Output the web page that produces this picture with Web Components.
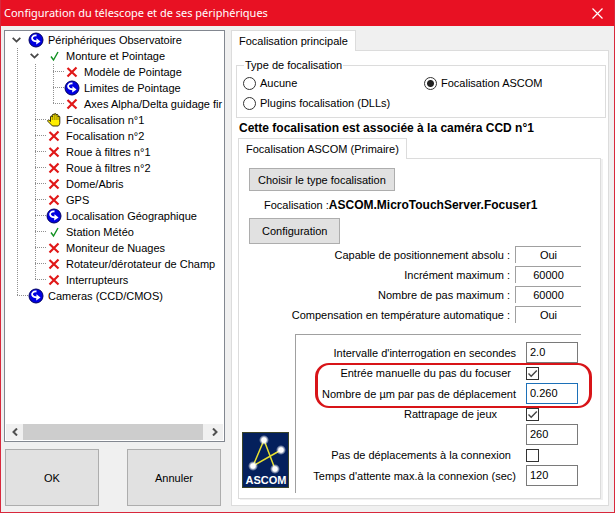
<!DOCTYPE html>
<html lang="fr">
<head>
<meta charset="utf-8">
<title>Configuration du télescope</title>
<style>
  body {
    margin: 0;
    font: 11px/16px "Liberation Sans", Arial, sans-serif;
    color: #000;
    --face: #f0f0f0;
    --line: #dcdcdc;
  }
</style>
</head>
<body>
<script>
class AppWindow extends HTMLElement {
  connectedCallback() {
    this.attachShadow({ mode: 'open' });
    this.shadowRoot.innerHTML = `
      <style>
        :host {
          display: flex;
          flex-direction: column;
          box-sizing: border-box;
          min-height: 100vh;
          background: var(--face);
          border: 1px solid #d8283c;
          border-top: 0;
        }
        header {
          display: flex;
          align-items: center;
          justify-content: space-between;
          height: 26px;
          padding: 0 9px 0 3px;
          background: #e81123;
          color: #fff;
        }
        h1 {
          margin: 0;
          font: 11px/16px "Noto Sans", "Open Sans", sans-serif;
        }
        button {
          display: flex;
          padding: 2px;
          border: 0;
          background: none;
        }
        main {
          flex: 1;
          display: grid;
          grid-template-columns: minmax(0, 221fr) minmax(0, 378fr);
          gap: 6px;
          padding: 4px 5px 6px 3px;
        }
      </style>
      <header>
        <h1>${this.getAttribute('caption')}</h1>
        <button type="button" aria-label="Fermer">
          <svg width="11" height="11" viewBox="0 0 11 11" stroke="#fff" stroke-width="1.2"><path d="M.5.5l10 10M10.500.5l-10 10"/></svg>
        </button>
      </header>
      <main><slot></slot></main>
    `;
  }
}

class SidePane extends HTMLElement {
  connectedCallback() {
    this.attachShadow({ mode: 'open' });
    this.shadowRoot.innerHTML = `
      <style>
        :host { display: flex; flex-direction: column; gap: 7px; }
        .actions {
          display: grid;
          grid-template-columns: 1fr 1fr;
          gap: 28px;
          padding: 0 4px 0 1px;
        }
      </style>
      <slot></slot>
      <div class="actions"><slot name="action"></slot></div>
    `;
  }
}

class PushButton extends HTMLElement {
  connectedCallback() {
    this.attachShadow({ mode: 'open' });
    this.shadowRoot.innerHTML = `
      <style>
        :host { display: grid; }
        button {
          height: 23px;
          padding: 0 8px;
          border: 1px solid #adadad;
          background: #e1e1e1;
          color: inherit;
          font: inherit;
        }
        :host([size="medium"]) button { height: 26px; padding: 0 12px; }
        :host([size="large"]) button { height: 57px; }
      </style>
      <button type="button"><slot></slot></button>
    `;
  }
}

class TreeView extends HTMLElement {
  connectedCallback() {
    this.attachShadow({ mode: 'open' });
    this.shadowRoot.innerHTML = `
      <style>
        :host {
          flex: 1;
          display: flex;
          flex-direction: column;
          min-height: 0;
          border: 1px solid #828790;
          background: #fff;
          overflow: hidden;
        }
        .items { flex: 1; padding: 1px 0 0 12px; overflow: hidden; }
        .scroll {
          display: flex;
          justify-content: space-between;
          height: 16px;
          margin: 1px;
          background: var(--face);
        }
        button {
          display: flex;
          align-items: center;
          justify-content: center;
          width: 17px;
          padding: 0;
          border: 0;
          background: none;
        }
        .thumb { flex: 1; margin-right: 3px; background: #cdcdcd; }
        svg { fill: none; stroke: #505050; stroke-width: 2; }
      </style>
      <div class="items" role="tree"><slot></slot></div>
      <div class="scroll">
        <button type="button" aria-label="Gauche"><svg width="6" height="8" viewBox="0 0 6 8"><path d="M5 .5L1.500 4L5 7.500"/></svg></button>
        <div class="thumb"></div>
        <button type="button" aria-label="Droite"><svg width="6" height="8" viewBox="0 0 6 8"><path d="M1 .5L4.500 4L1 7.500"/></svg></button>
      </div>
    `;
  }
}

const ICONS = {
  link: `<circle cx="8" cy="8" r="7" fill="#0000e0" stroke="#000060"/>
    <path d="M8.500 3.500C5.500 3 3.500 5 4.200 7c.5 1.600 2.300 2.300 4.800 2.300" fill="none" stroke="#fff" stroke-width="1.800"/>
    <path d="M8.500 6.200l4 3.400-4.300 3z" fill="#fff"/>`,
  check: '<path d="M5 8.500l2.500 3.500L12 4" fill="none" stroke="#109020" stroke-width="1.400"/>',
  cross: '<path d="M3.500 4l9 8.500M12.500 3.500L3.500 12.500" fill="none" stroke="#e01818" stroke-width="2.200"/>',
  hand: `<path d="M4.500 9.500V5c0-1.300 1.800-1.300 1.800 0V3.200c0-1.300 1.900-1.300 1.900 0V2.500c0-1.300 1.900-1.300 1.900 0v.8c0-1.300 1.900-1.300 1.900 0V5c0-1.200 1.800-1.200 1.800 0v5.500c0 2-1 3-1.500 3.500H6.500L2 9.500c-1-1.200.5-2.200 1.500-1.200z" fill="#fe0" stroke="#201800" stroke-width=".9"/>
    <path d="M6.300 5v3M8.200 3.500v4.500M10.100 3.500v4.500M12 5v3" stroke="#504000" stroke-width=".6"/>`
};

class TreeItem extends HTMLElement {
  connectedCallback() {
    const open = this.hasAttribute('open');
    this.setAttribute('role', 'treeitem');
    this.attachShadow({ mode: 'open' });
    this.shadowRoot.innerHTML = `
      <style>
        :host {
          display: grid;
          grid-template-columns: 11px auto;
          justify-content: start;
          --dots: repeating-linear-gradient(to bottom, #909090 0 1px, transparent 1px 2px) left / 1px 100% no-repeat;
        }
        .joint { display: grid; grid-template-rows: 8px 8px; }
        .joint i:first-child {
          background: var(--dots), repeating-linear-gradient(to right, #909090 0 1px, transparent 1px 2px) bottom / 100% 1px no-repeat;
        }
        .joint i:last-child, .rail { background: var(--dots); }
        :host([last]) .rail, :host([last]) .joint i:last-child { background: none; }
        .toggle {
          display: flex;
          align-items: center;
          width: 11px;
          height: 16px;
          margin-left: -5px;
          padding: 0;
          border: 0;
          background: #fff;
        }
        .row { display: flex; align-items: center; gap: 4px; white-space: nowrap; }
        .children { padding-left: 7px; }
      </style>
      ${open ? `<button class="toggle" type="button" aria-label="Réduire">
        <svg width="9" height="6" viewBox="0 0 9 6" fill="none" stroke="#484848" stroke-width="1.800"><path d="M.7.8l3.800 3.800L8.300.8"/></svg>
      </button>` : '<div class="joint"><i></i><i></i></div>'}
      <div class="row">
        <svg width="16" height="16" viewBox="0 0 16 16">${ICONS[this.getAttribute('icon')]}</svg>
        <span>${this.getAttribute('label')}</span>
      </div>
      <div class="rail"></div>
      <div class="children" role="group"><slot></slot></div>
    `;
  }
}

class TabPanel extends HTMLElement {
  connectedCallback() {
    this.attachShadow({ mode: 'open' });
    this.shadowRoot.innerHTML = `
      <style>
        :host { display: flex; flex-direction: column; align-items: stretch; }
        [role=tab] {
          position: relative;
          align-self: flex-start;
          height: 21px;
          margin: 0 0 -1px;
          padding: 0 7px;
          border: 1px solid var(--line);
          border-bottom: 0;
          background: #fff;
          color: inherit;
          font: inherit;
        }
        .panel {
          flex: 1;
          display: flex;
          flex-direction: column;
          border: 1px solid var(--line);
          background: #fff;
        }
        :host([inner]) .panel { box-shadow: 2px 1px 0 #f0f0f0; }
      </style>
      <button role="tab" type="button" aria-selected="true">${this.getAttribute('tab')}</button>
      <div class="panel" role="tabpanel"><slot></slot></div>
    `;
  }
}

class FocusType extends HTMLElement {
  connectedCallback() {
    this.attachShadow({ mode: 'open' });
    this.shadowRoot.innerHTML = `
      <style>
        :host { display: block; padding: 6px 2px 0 4px; }
        fieldset {
          display: grid;
          grid-template-columns: 1fr 1fr;
          grid-auto-rows: 20px;
          margin: 0;
          padding: 0 0 4px 6px;
          border: 1px solid var(--line);
        }
        legend { margin-left: 1px; padding: 0 1px; }
        label { display: flex; align-items: center; gap: 4px; }
        input {
          appearance: none;
          box-sizing: border-box;
          width: 13px;
          height: 13px;
          margin: 0;
          border: 1px solid #333;
          border-radius: 50%;
          background: #fff;
        }
        input:checked { background: radial-gradient(circle, #222 3px, #fff 4px); }
      </style>
      <fieldset>
        <legend>Type de focalisation</legend>
        <label><input type="radio" name="type">Aucune</label>
        <label><input type="radio" name="type" checked>Focalisation ASCOM</label>
        <label><input type="radio" name="type">Plugins focalisation (DLLs)</label>
      </fieldset>
    `;
  }
}

class FocuserDriver extends HTMLElement {
  connectedCallback() {
    this.attachShadow({ mode: 'open' });
    this.shadowRoot.innerHTML = `
      <style>
        :host {
          display: flex;
          flex-direction: column;
          align-items: flex-start;
          padding: 9px 10px 2px;
        }
        p { margin: 6px 0 5px 15px; }
        b { font-size: 12px; }
      </style>
      <push-button>Choisir le type focalisation</push-button>
      <p>Focalisation :<b>${this.getAttribute('driver')}</b></p>
      <push-button size="medium">Configuration</push-button>
    `;
  }
}

class ReadOut extends HTMLElement {
  connectedCallback() {
    this.attachShadow({ mode: 'open' });
    this.shadowRoot.innerHTML = `
      <style>
        :host {
          display: grid;
          grid-template-columns: 1fr 66px;
          gap: 5px;
          height: 20px;
          padding-right: 19px;
          text-align: right;
        }
        label { padding-top: 1px; }
        output {
          box-sizing: border-box;
          height: 17px;
          border: solid #a0a0a0;
          border-width: 1px 0 0 1px;
          text-align: center;
        }
      </style>
      <label for="value">${this.getAttribute('label')}</label>
      <output id="value">${this.getAttribute('value')}</output>
    `;
  }
}

class FormRow extends HTMLElement {
  connectedCallback() {
    const label = this.getAttribute('label');
    const check = this.getAttribute('type') === 'checkbox';
    const state = check
      ? (this.hasAttribute('checked') ? 'checked' : '')
      : `value="${this.getAttribute('value')}"`;
    this.attachShadow({ mode: 'open' });
    this.shadowRoot.innerHTML = `
      <style>
        :host {
          display: grid;
          grid-template-columns: 1fr 52px;
          align-items: center;
          gap: 10px;
          text-align: right;
        }
        :host([type="checkbox"]) { height: 20px; }
        :host([type="checkbox"]) label { padding-right: 5px; }
        :host([short]) label { padding-right: 19px; }
        input { box-sizing: border-box; margin: 0; background: #fff; }
        input[type=text] {
          width: 100%;
          height: 21px;
          padding: 0 3px 2px;
          border: 1px solid #7a7a7a;
          color: inherit;
          font: inherit;
        }
        :host([active]) input { border-color: #1c70b8; }
        input[type=checkbox] {
          appearance: none;
          width: 13px;
          height: 13px;
          border: 1px solid #333;
        }
        .box { display: grid; justify-items: start; align-items: center; }
        .box > * { grid-area: 1 / 1; }
        svg { display: none; pointer-events: none; }
        input:checked + svg { display: block; }
      </style>
      ${label ? `<label for="field">${label}</label>` : '<span></span>'}
      <div class="box">
        <input id="field" type="${check ? 'checkbox' : 'text'}" ${state} ${label ? '' : 'aria-label="Jeux"'}>
        <svg width="13" height="13" viewBox="0 0 13 13" fill="none" stroke="#444" stroke-width="1.400"><path d="M2.500 6.500l2.700 2.700L10.800 3.600"/></svg>
      </div>
    `;
  }
}

// red pen line drawn round the rows it holds
class MarkedRows extends HTMLElement {
  connectedCallback() {
    this.attachShadow({ mode: 'open' });
    this.shadowRoot.innerHTML = `
      <style>
        :host { display: block; position: relative; }
        .pen {
          position: absolute;
          inset: 0 -14px -4px 19px;
          border: 2px solid #d81418;
          border-width: 2px 3px;
          border-radius: 14px;
          pointer-events: none;
        }
      </style>
      <slot></slot>
      <div class="pen"></div>
    `;
  }
}

class AscomLogo extends HTMLElement {
  connectedCallback() {
    this.attachShadow({ mode: 'open' });
    this.shadowRoot.innerHTML = `
      <style>
        :host { display: block; margin-bottom: 5px; }
        svg { display: block; }
      </style>
      <svg width="47" height="56" viewBox="0 0 47 56" role="img" aria-label="ASCOM">
        <defs>
          <radialGradient id="star">
            <stop offset=".45" stop-color="#fff"/>
            <stop offset="1" stop-color="#fff" stop-opacity="0"/>
          </radialGradient>
        </defs>
        <rect x=".5" y=".5" width="46" height="55" fill="#04205c" stroke="#3c4428"/>
        <path d="M33 37L22 8L11 34L39 18" fill="none" stroke="#e8e030" stroke-width="1.500"/>
        <g fill="url(#star)">
          <circle cx="22" cy="8" r="5"/><circle cx="39" cy="18" r="5"/>
          <circle cx="11" cy="34" r="5"/><circle cx="33" cy="37" r="5"/>
        </g>
        <text x="24" y="52" fill="#fff" font-family="Liberation Sans" font-size="11" font-weight="bold" text-anchor="middle">ASCOM</text>
      </svg>
    `;
  }
}

class FocuserSettings extends HTMLElement {
  connectedCallback() {
    this.attachShadow({ mode: 'open' });
    this.shadowRoot.innerHTML = `
      <style>
        :host {
          display: flex;
          align-items: flex-end;
          gap: 6px;
          margin: 8px 19px 5px 3px;
        }
        .frame {
          flex: 1;
          padding: 7px 3px 7px 0;
          border: solid #a0a0a0;
          border-width: 1px 0 0 1px;
        }
      </style>
      <ascom-logo></ascom-logo>
      <div class="frame"><slot></slot></div>
    `;
  }
}

class AssociationNote extends HTMLElement {
  connectedCallback() {
    this.attachShadow({ mode: 'open' });
    this.shadowRoot.innerHTML = `
      <style>
        :host { display: block; padding: 2px 7px; font-size: 12px; font-weight: bold; }
      </style>
      <slot></slot>
    `;
  }
}

customElements.define('app-window', AppWindow);
customElements.define('side-pane', SidePane);
customElements.define('push-button', PushButton);
customElements.define('tree-view', TreeView);
customElements.define('tree-item', TreeItem);
customElements.define('tab-panel', TabPanel);
customElements.define('focus-type', FocusType);
customElements.define('focuser-driver', FocuserDriver);
customElements.define('read-out', ReadOut);
customElements.define('form-row', FormRow);
customElements.define('marked-rows', MarkedRows);
customElements.define('ascom-logo', AscomLogo);
customElements.define('focuser-settings', FocuserSettings);
customElements.define('association-note', AssociationNote);
</script>
<style>
  tab-panel[inner] { flex: 1; margin: 0 7px 6px 6px; }
</style>

<app-window caption="Configuration du télescope et de ses périphériques">
  <side-pane>
    <tree-view>
      <tree-item open icon="link" label="Périphériques Observatoire">
        <tree-item open icon="check" label="Monture et Pointage">
          <tree-item icon="cross" label="Modèle de Pointage"></tree-item>
          <tree-item icon="link" label="Limites de Pointage"></tree-item>
          <tree-item last icon="cross" label="Axes Alpha/Delta guidage fir"></tree-item>
        </tree-item>
        <tree-item icon="hand" label="Focalisation n°1"></tree-item>
        <tree-item icon="cross" label="Focalisation n°2"></tree-item>
        <tree-item icon="cross" label="Roue à filtres n°1"></tree-item>
        <tree-item icon="cross" label="Roue à filtres n°2"></tree-item>
        <tree-item icon="cross" label="Dome/Abris"></tree-item>
        <tree-item icon="cross" label="GPS"></tree-item>
        <tree-item icon="link" label="Localisation Géographique"></tree-item>
        <tree-item icon="check" label="Station Météo"></tree-item>
        <tree-item icon="cross" label="Moniteur de Nuages"></tree-item>
        <tree-item icon="cross" label="Rotateur/dérotateur de Champ"></tree-item>
        <tree-item last icon="cross" label="Interrupteurs"></tree-item>
      </tree-item>
      <tree-item last icon="link" label="Cameras (CCD/CMOS)"></tree-item>
    </tree-view>
    <push-button slot="action" size="large">OK</push-button>
    <push-button slot="action" size="large">Annuler</push-button>
  </side-pane>

  <tab-panel tab="Focalisation principale">
    <focus-type></focus-type>
    <association-note>Cette focalisation est associée à la caméra CCD n°1</association-note>
    <tab-panel inner tab="Focalisation ASCOM (Primaire)">
      <focuser-driver driver="ASCOM.MicroTouchServer.Focuser1"></focuser-driver>
      <read-out label="Capable de positionnement absolu :" value="Oui"></read-out>
      <read-out label="Incrément maximum :" value="60000"></read-out>
      <read-out label="Nombre de pas maximum :" value="60000"></read-out>
      <read-out label="Compensation en température automatique :" value="Oui"></read-out>
      <focuser-settings>
        <form-row label="Intervalle d'interrogation en secondes" value="2.0"></form-row>
        <marked-rows>
          <form-row type="checkbox" checked label="Entrée manuelle du pas du focuser"></form-row>
          <form-row active label="Nombre de µm par pas de déplacement" value="0.260"></form-row>
        </marked-rows>
        <form-row type="checkbox" short checked label="Rattrapage de jeux"></form-row>
        <form-row value="260"></form-row>
        <form-row type="checkbox" label="Pas de déplacements à la connexion"></form-row>
        <form-row label="Temps d'attente max.à la connexion (sec)" value="120"></form-row>
      </focuser-settings>
    </tab-panel>
  </tab-panel>
</app-window>
</body>
</html>
